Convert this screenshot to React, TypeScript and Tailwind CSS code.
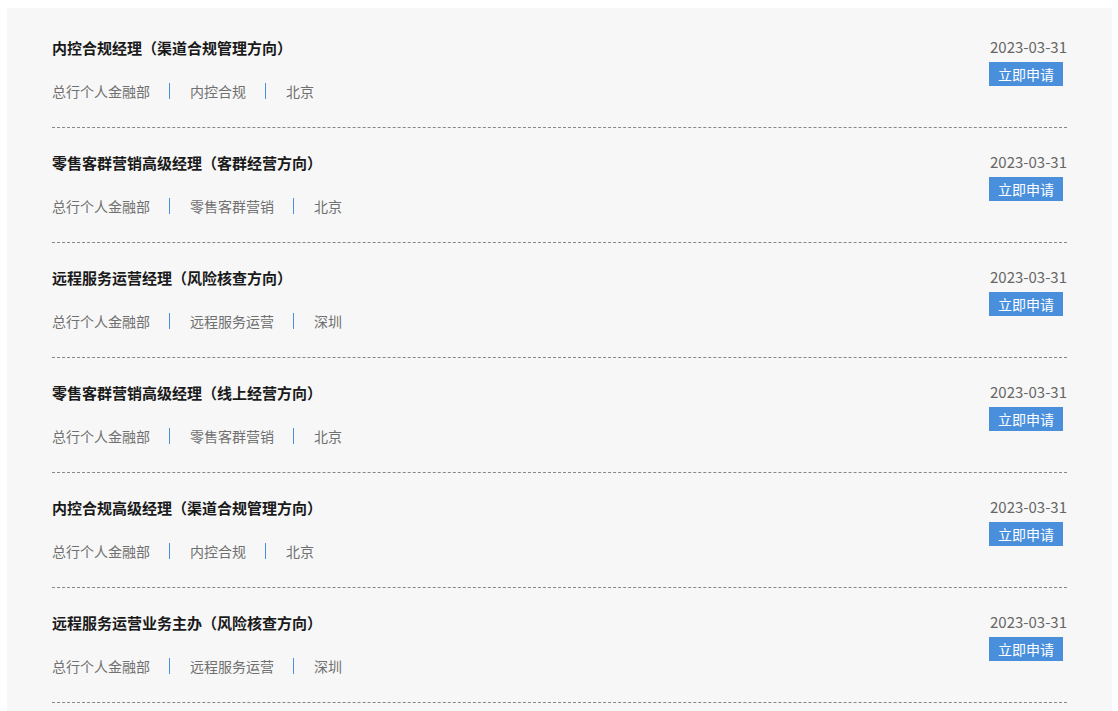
import React from 'react';

type Job = { title: string; dept: string; category: string; city: string; date: string };

const jobs: Job[] = [
  { title: '内控合规经理（渠道合规管理方向）', dept: '总行个人金融部', category: '内控合规', city: '北京', date: '2023-03-31' },
  { title: '零售客群营销高级经理（客群经营方向）', dept: '总行个人金融部', category: '零售客群营销', city: '北京', date: '2023-03-31' },
  { title: '远程服务运营经理（风险核查方向）', dept: '总行个人金融部', category: '远程服务运营', city: '深圳', date: '2023-03-31' },
  { title: '零售客群营销高级经理（线上经营方向）', dept: '总行个人金融部', category: '零售客群营销', city: '北京', date: '2023-03-31' },
  { title: '内控合规高级经理（渠道合规管理方向）', dept: '总行个人金融部', category: '内控合规', city: '北京', date: '2023-03-31' },
  { title: '远程服务运营业务主办（风险核查方向）', dept: '总行个人金融部', category: '远程服务运营', city: '深圳', date: '2023-03-31' },
];

// blue divider between meta fields
const Sep = () => <span className="inline-block w-[1px] h-[16px] bg-[#4a8fdb] ml-[19px] mr-[20px]" />;

const JobRow: React.FC<{ job: Job }> = ({ job }) => (
  <div className="flex justify-between pt-[25px] pb-[25px] border-b border-dashed border-[#888]">
    <div>
      <div className="text-[15px] leading-[20px] font-bold text-[#1a1a1a]">{job.title}</div>
      <div className="mt-[24px] text-[14px] leading-[20px] text-[#707070] flex items-center -translate-y-[1px]">
        <span>{job.dept}</span>
        <Sep />
        <span>{job.category}</span>
        <Sep />
        <span>{job.city}</span>
      </div>
    </div>
    <div className="flex flex-col items-end">
      <div className="text-[15px] leading-[20px] text-[#666] -mt-[1px]">{job.date}</div>
      <button className="mt-[5px] mr-[4px] h-[24px] px-[9px] bg-[#4a8fdb] text-white text-[14px] leading-[24px]">
        立即申请
      </button>
    </div>
  </div>
);

export default function App() {
  return (
    <div
      className="h-screen bg-white pt-[8px] pl-[7px] pr-[6px] overflow-hidden"
      style={{ fontFamily: '"Noto Sans CJK SC", "Noto Sans", sans-serif' }}
    >
      <div className="bg-[#f7f7f7] pt-[5px] px-[45px] h-[740px]">
        {jobs.map((j, i) => (
          <JobRow key={i} job={j} />
        ))}
      </div>
    </div>
  );
}
